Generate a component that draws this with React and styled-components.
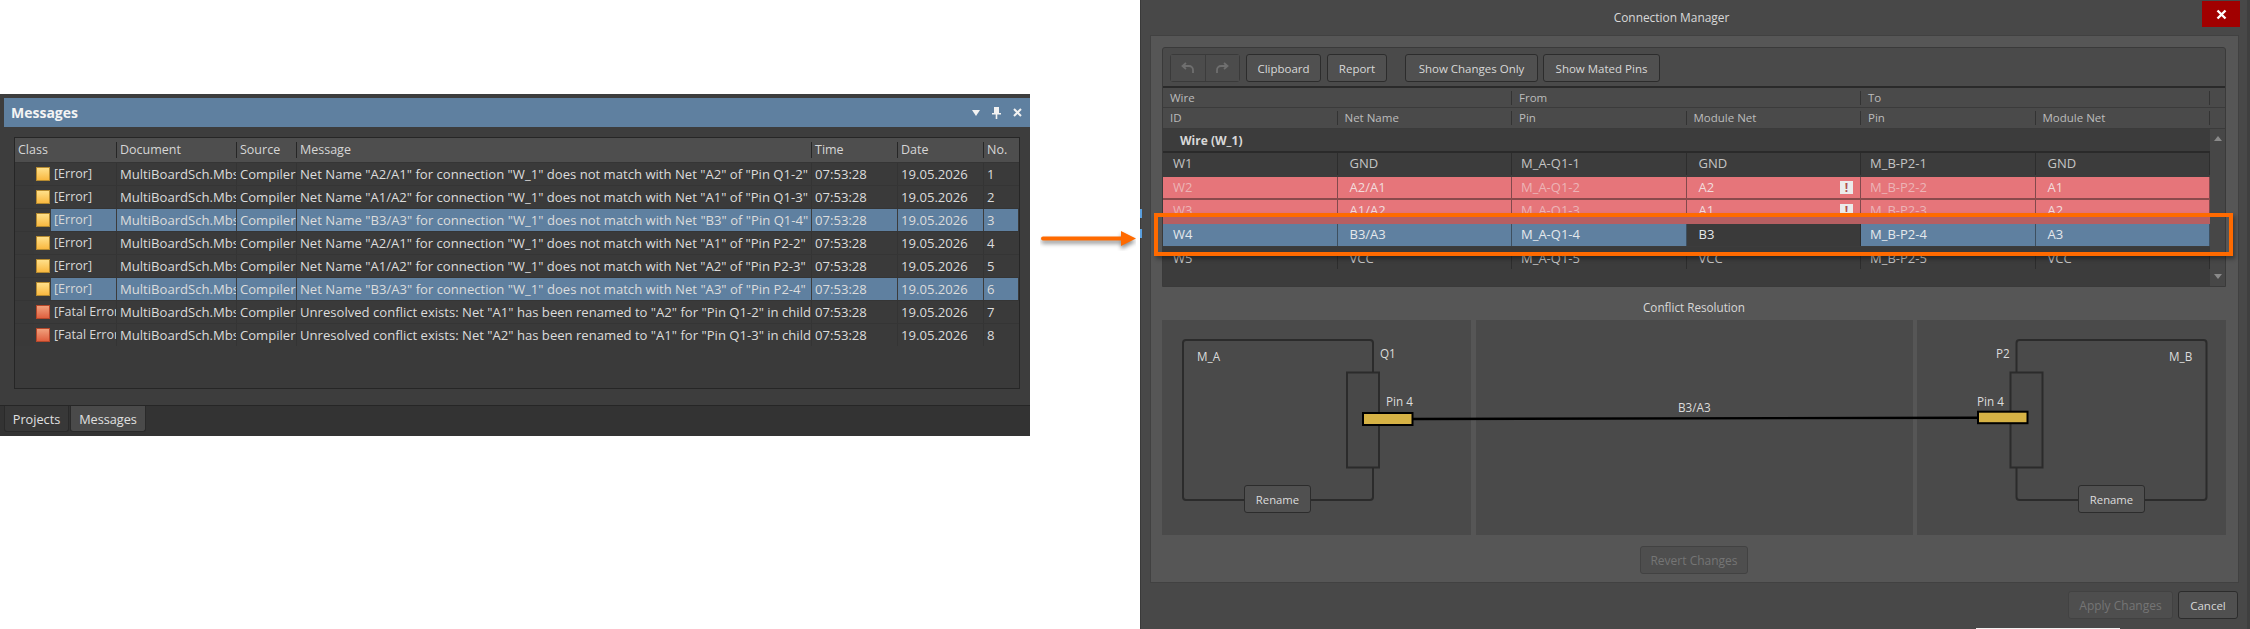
import React from 'react'
import styled, { createGlobalStyle } from 'styled-components'

const GlobalStyle = createGlobalStyle`
  html, body {
    margin: 0;
    padding: 0;
    background: #fff;
    overflow: hidden;
  }
  body {
    font-family: "Open Sans", "Noto Sans", "Liberation Sans", sans-serif;
  }
`

const messages = [
  { kind: 'error', text: 'Net Name "A2/A1" for connection "W_1" does not match with Net "A2" of "Pin Q1-2"' },
  { kind: 'error', text: 'Net Name "A1/A2" for connection "W_1" does not match with Net "A1" of "Pin Q1-3"' },
  { kind: 'error', text: 'Net Name "B3/A3" for connection "W_1" does not match with Net "B3" of "Pin Q1-4"', selected: true },
  { kind: 'error', text: 'Net Name "A2/A1" for connection "W_1" does not match with Net "A1" of "Pin P2-2"' },
  { kind: 'error', text: 'Net Name "A1/A2" for connection "W_1" does not match with Net "A2" of "Pin P2-3"' },
  { kind: 'error', text: 'Net Name "B3/A3" for connection "W_1" does not match with Net "A3" of "Pin P2-4"', selected: true },
  { kind: 'fatal', text: 'Unresolved conflict exists: Net "A1" has been renamed to "A2" for "Pin Q1-2" in child' },
  { kind: 'fatal', text: 'Unresolved conflict exists: Net "A2" has been renamed to "A1" for "Pin Q1-3" in child' },
]

const wires = [
  { id: 'W1', net: 'GND', from: 'M_A-Q1-1', fromNet: 'GND', to: 'M_B-P2-1', toNet: 'GND' },
  { id: 'W2', net: 'A2/A1', from: 'M_A-Q1-2', fromNet: 'A2', to: 'M_B-P2-2', toNet: 'A1', tone: 'red', warn: true },
  { id: 'W3', net: 'A1/A2', from: 'M_A-Q1-3', fromNet: 'A1', to: 'M_B-P2-3', toNet: 'A2', tone: 'red', warn: true },
  { id: 'W4', net: 'B3/A3', from: 'M_A-Q1-4', fromNet: 'B3', to: 'M_B-P2-4', toNet: 'A3', tone: 'blue', plainNet: true },
  { id: 'W5', net: 'VCC', from: 'M_A-Q1-5', fromNet: 'VCC', to: 'M_B-P2-5', toNet: 'VCC' },
]

const App = () => {
  return (
    <Page>
      <GlobalStyle />
      <MessagesPanel>
        <TitleBar>
          <PanelTitle>Messages</PanelTitle>
          <TitleIcons>
            <svg width="8" height="6" viewBox="0 0 8 6"><path d="M0 0h8L4 6z" fill="#f2f2f2" /></svg>
            <svg width="9" height="12" viewBox="0 0 9 12"><path d="M2 0h5v6h2v1.500H5.300V12H3.700V7.500H0V6h2z" fill="#f2f2f2" /></svg>
            <svg width="9" height="9" viewBox="0 0 9 9"><path d="M1 1l7 7M8 1L1 8" stroke="#f2f2f2" strokeWidth="2" /></svg>
          </TitleIcons>
        </TitleBar>
        <MessageTable>
          <MessageHead>
            <HeadCell>Class</HeadCell>
            <HeadCell>Document</HeadCell>
            <HeadCell>Source</HeadCell>
            <HeadCell>Message</HeadCell>
            <HeadCell>Time</HeadCell>
            <HeadCell>Date</HeadCell>
            <HeadCell>No.</HeadCell>
          </MessageHead>
          {messages.map((m, i) => (
            <MessageRow key={i}>
              <TreeGutter />
              <ClassCell $selected={m.selected}>
                <StatusIcon $kind={m.kind} />
                <ClassLabel $selected={m.selected}>{m.kind === 'fatal' ? '[Fatal Error]' : '[Error]'}</ClassLabel>
              </ClassCell>
              <MessageCell $selected={m.selected}>MultiBoardSch.Mbs</MessageCell>
              <MessageCell $selected={m.selected}>Compiler</MessageCell>
              <MessageCell $selected={m.selected}>{m.text}</MessageCell>
              <MessageCell $selected={m.selected}>07:53:28</MessageCell>
              <MessageCell $selected={m.selected}>19.05.2026</MessageCell>
              <MessageCell $selected={m.selected}>{i + 1}</MessageCell>
            </MessageRow>
          ))}
        </MessageTable>
        <TabStrip>
          <Tab $w={65}>Projects</Tab>
          <Tab $w={76} $active>Messages</Tab>
        </TabStrip>
      </MessagesPanel>

      <ArrowSlot>
        <svg width="96" height="24" viewBox="0 0 96 24">
          <path d="M3 9.500H81V4L96 11.500 81 19V13.500H3a2 2 0 0 1 0-4z" fill="#ff6a00" style={{ filter: 'drop-shadow(0 3px 2px rgba(0,0,0,.45))' }} />
        </svg>
      </ArrowSlot>

      <Dialog>
        <DialogHeader>
          <DialogTitle>Connection Manager</DialogTitle>
          <CloseButton>
            <svg width="11" height="11" viewBox="0 0 11 11"><path d="M1.500 1.500l8 8M9.500 1.500l-8 8" stroke="#fff" strokeWidth="2.400" /></svg>
          </CloseButton>
        </DialogHeader>
        <DialogBody>
          <WireBox>
            <Toolbar>
              <UndoGroup>
                <UndoButton>
                  <svg width="14" height="12" viewBox="0 0 14 12"><path d="M5 1L1.500 4 5 7M2 4h6a4 4 0 0 1 4 4v3" fill="none" stroke="#6f6f6f" strokeWidth="1.800" /></svg>
                </UndoButton>
                <UndoButton>
                  <svg width="14" height="12" viewBox="0 0 14 12"><path d="M9 1l3.500 3L9 7M12 4H6a4 4 0 0 0-4 4v3" fill="none" stroke="#6f6f6f" strokeWidth="1.800" /></svg>
                </UndoButton>
              </UndoGroup>
              <ToolButton $w={75} $ml={6}>Clipboard</ToolButton>
              <ToolButton $w={60} $ml={6}>Report</ToolButton>
              <ToolButton $w={133} $ml={18}>Show Changes Only</ToolButton>
              <ToolButton $w={117} $ml={5}>Show Mated Pins</ToolButton>
            </Toolbar>

            <WireHeadRow $h={20}>
              <WireHeadCell $span={2}>Wire</WireHeadCell>
              <WireHeadCell $span={2}>From</WireHeadCell>
              <WireHeadCell $span={2}>To</WireHeadCell>
              <HeadEnd />
            </WireHeadRow>
            <WireHeadRow $h={21}>
              <WireHeadCell>ID</WireHeadCell>
              <WireHeadCell>Net Name</WireHeadCell>
              <WireHeadCell>Pin</WireHeadCell>
              <WireHeadCell>Module Net</WireHeadCell>
              <WireHeadCell>Pin</WireHeadCell>
              <WireHeadCell>Module Net</WireHeadCell>
              <HeadEnd />
            </WireHeadRow>

            <WireScroll>
              <WireList>
                <GroupRow>Wire (W_1)</GroupRow>
                {wires.map((w) => (
                  <WireRow key={w.id} $tone={w.tone}>
                    <WireCell $pad={10}>{w.id}</WireCell>
                    <WireCell $pad={12} $tone={w.tone}>{w.net}</WireCell>
                    <WireCell $pad={9}>{w.from}</WireCell>
                    <WireCell $pad={12} $tone={w.tone} $plain={w.plainNet}>
                      {w.fromNet}
                      {w.warn && <WarnBadge>!</WarnBadge>}
                    </WireCell>
                    <WireCell $pad={9}>{w.to}</WireCell>
                    <WireCell $pad={12} $tone={w.tone}>{w.toNet}</WireCell>
                  </WireRow>
                ))}
              </WireList>
              <ScrollColumn>
                <svg width="8" height="5" viewBox="0 0 8 5"><path d="M0 5L4 0l4 5z" fill="#8a8a8a" /></svg>
                <svg width="8" height="5" viewBox="0 0 8 5"><path d="M0 0l4 5 4-5z" fill="#8a8a8a" /></svg>
              </ScrollColumn>
              <HighlightFrame>
                <ShadeTop />
                <ShadeBottom />
              </HighlightFrame>
            </WireScroll>
          </WireBox>

          <SectionTitle>Conflict Resolution</SectionTitle>

          <ConflictRow>
            <ConflictPane />
            <ConflictPane />
            <ConflictPane />
            <DiagramLayer width="1064" height="215" viewBox="0 0 1064 215">
              <g fill="none" stroke="#2b2b2b" strokeWidth="2">
                <rect x="21" y="20" width="190" height="160" rx="3" />
                <rect x="854.500" y="20" width="190" height="160" rx="3" />
              </g>
              <g fill="#484848" stroke="#2b2b2b" strokeWidth="2">
                <rect x="185" y="52.500" width="32" height="95" />
                <rect x="848.500" y="52.500" width="32" height="95" />
              </g>
              <path d="M251 99L816 97.700" stroke="#000" strokeWidth="2.400" />
              <g fill="#d6b245" stroke="#000" strokeWidth="2">
                <rect x="201" y="93" width="49.500" height="12" />
                <rect x="816" y="91.700" width="49.500" height="11.500" />
              </g>
              <DiagramText x="35" y="41">M_A</DiagramText>
              <DiagramText x="218" y="38">Q1</DiagramText>
              <DiagramText x="224" y="86">Pin 4</DiagramText>
              <DiagramText x="516" y="92">B3/A3</DiagramText>
              <DiagramText x="834" y="38">P2</DiagramText>
              <DiagramText x="1007" y="41">M_B</DiagramText>
              <DiagramText x="815" y="86">Pin 4</DiagramText>
            </DiagramLayer>
            <RenameButton $x={82}>Rename</RenameButton>
            <RenameButton $x={916}>Rename</RenameButton>
          </ConflictRow>

          <RevertRow>
            <DimButton $w={108}>Revert Changes</DimButton>
          </RevertRow>
        </DialogBody>
        <DialogFooter>
          <DimButton $w={105}>Apply Changes</DimButton>
          <ToolButton $w={60} $ml={5}>Cancel</ToolButton>
        </DialogFooter>
      </Dialog>
    </Page>
  )
}

export default App

const Page = styled.div`
  width: 2250px;
  height: 629px;
  display: flex;
  align-items: flex-start;
  background: #fff;
  overflow: hidden;
`

const MessagesPanel = styled.section`
  width: 1030px;
  height: 342px;
  margin-top: 94px;
  flex: none;
  background: #3d3d3d;
  padding: 4px 0 0 4px;
  box-sizing: border-box;
  display: flex;
  flex-direction: column;
`

const TitleBar = styled.header`
  height: 29px;
  flex: none;
  background: #5f80a0;
  display: flex;
  align-items: center;
  justify-content: space-between;
  padding: 0 8px 0 7px;
`

const PanelTitle = styled.h2`
  margin: 0;
  font-size: 14px;
  font-weight: 700;
  color: #f4f4f4;
`

const TitleIcons = styled.div`
  display: flex;
  align-items: center;
  gap: 12px;
`

const MessageTable = styled.div`
  margin: 10px 10px 0 10px;
  height: 252px;
  flex: none;
  box-sizing: border-box;
  border: 1px solid #262626;
  background: #3a3a3a;
  overflow: hidden;
`

const messageColumns = '102px 120px 60px 515px 86px 86px 34px'

const MessageHead = styled.div`
  display: grid;
  grid-template-columns: ${messageColumns};
  height: 24px;
  background: #4e4e4e;
`

const HeadCell = styled.div`
  font-size: 12.500px;
  line-height: 24px;
  color: #d6d6d6;
  padding-left: 3px;
  position: relative;

  &:not(:last-child)::after {
    content: "";
    position: absolute;
    right: 0;
    top: 4px;
    bottom: 4px;
    width: 1px;
    background: #262626;
  }
`

const MessageRow = styled.div`
  display: grid;
  grid-template-columns: 19px 83px 120px 60px 515px 86px 86px 34px;
  height: 23px;
  box-sizing: border-box;
  border-top: 1px solid #353535;
`

const TreeGutter = styled.div`
  background: #393939;
`

const ClassCell = styled.div`
  display: flex;
  align-items: center;
  position: relative;
  border-right: 1px solid ${(p) => (p.$selected ? '#3c3c3c' : '#343434')};
  padding-left: 2px;
  overflow: hidden;
`

const ClassLabel = styled.span`
  font-size: 12.500px;
  line-height: 22px;
  color: #d8d8d8;
  white-space: nowrap;
  margin-left: 1px;
  padding-left: 3px;
  flex: 1;
  background: ${(p) => (p.$selected ? '#5f80a0' : 'transparent')};
`

const StatusIcon = styled.i`
  width: 14px;
  height: 14px;
  flex: none;
  box-sizing: border-box;
  border: 1px solid ${(p) => (p.$kind === 'fatal' ? '#b5472a' : '#b58a30')};
  background: ${(p) =>
    p.$kind === 'fatal'
      ? 'linear-gradient(#f0a07c, #e0603f)'
      : 'linear-gradient(#ffe08a, #f9b840)'};
`

const MessageCell = styled.div`
  font-size: 13.100px;
  line-height: 22px;
  color: #dcdcdc;
  padding-left: 3px;
  white-space: nowrap;
  overflow: hidden;
  background: ${(p) => (p.$selected ? '#5f80a0' : 'transparent')};
  border-right: 1px solid ${(p) => (p.$selected ? '#3c3c3c' : '#343434')};

  &:last-child {
    border-right: none;
  }
`

const TabStrip = styled.nav`
  margin: 16px 0 0 -4px;
  padding-left: 4px;
  flex: 1;
  background: #333;
  border-top: 1px solid #262626;
  display: flex;
  align-items: flex-start;
  gap: 1px;
`

const Tab = styled.div`
  width: ${(p) => p.$w}px;
  height: 26px;
  box-sizing: border-box;
  font-size: 12.700px;
  line-height: 26px;
  text-align: center;
  color: #e0e0e0;
  background: ${(p) => (p.$active ? '#4a4a4a' : '#383838')};
  border: 1px solid #2a2a2a;
  border-top: none;
  border-radius: 0 0 3px 3px;
`

const ArrowSlot = styled.div`
  width: 110px;
  flex: none;
  margin-top: 227px;
  padding-left: 10px;
  box-sizing: border-box;
`

const Dialog = styled.section`
  position: relative;
  width: 1110px;
  height: 629px;
  flex: none;
  background: #484848;
  border-left: 1px solid #3a3a3a;
  border-right: 3px solid #3f3f3f;
  box-sizing: border-box;
  display: flex;
  flex-direction: column;

  /* leftovers of the window behind, showing along the edges */
  &::before {
    content: "";
    position: absolute;
    left: -1px;
    top: 209px;
    width: 2px;
    height: 9px;
    background: #5aa0e0;
    box-shadow: 0 20px 0 #5aa0e0;
  }

  &::after {
    content: "";
    position: absolute;
    left: 835px;
    bottom: 0;
    width: 144px;
    height: 1px;
    background: #f2f2f2;
  }
`

const DialogHeader = styled.header`
  height: 34px;
  flex: none;
  display: flex;
  justify-content: space-between;
  align-items: flex-start;
  padding: 1px 7px 0 0;
`

const DialogTitle = styled.h1`
  flex: 1;
  margin: 0;
  font-size: 11.900px;
  font-weight: 400;
  line-height: 34px;
  margin-top: -1px;
  text-align: center;
  color: #d8d8d8;
`

const CloseButton = styled.div`
  width: 38px;
  height: 26px;
  background: #a10000;
  display: flex;
  align-items: center;
  justify-content: center;
`

const DialogBody = styled.div`
  margin-left: 9px;
  width: 1089px;
  height: 548px;
  flex: none;
  box-sizing: border-box;
  background: #565656;
  border: 1px solid #414141;
  padding: 11px 12px 0 11px;
`

const WireBox = styled.div`
  height: 240px;
  box-sizing: border-box;
  border: 1px solid #3a3a3a;
  border-radius: 3px 3px 0 0;
  background: #4a4a4a;
  display: flex;
  flex-direction: column;
`

const Toolbar = styled.div`
  height: 40px;
  flex: none;
  box-sizing: border-box;
  padding: 6px 0 0 7px;
  display: flex;
  align-items: flex-start;
  border-bottom: 2px solid #2a2a2a;
`

const UndoGroup = styled.div`
  width: 70px;
  height: 28px;
  box-sizing: border-box;
  border: 1px solid #3a3a3a;
  border-radius: 3px;
  display: flex;
`

const UndoButton = styled.div`
  flex: 1;
  display: flex;
  align-items: center;
  justify-content: center;
  background: #4c4c4c;

  & + & {
    border-left: 1px solid #3c3c3c;
  }
`

const ToolButton = styled.button`
  width: ${(p) => p.$w}px;
  height: 28px;
  margin-left: ${(p) => p.$ml || 0}px;
  padding: 0;
  box-sizing: border-box;
  border: 1px solid #2c2c2c;
  border-radius: 3px;
  background: #505050;
  color: #d8d8d8;
  font-family: inherit;
  font-size: 11.500px;
  white-space: nowrap;
`

const wireColumns = 'repeat(6, 174.500px)'

const WireHeadRow = styled.div`
  height: ${(p) => p.$h}px;
  flex: none;
  display: grid;
  grid-template-columns: ${wireColumns} 1fr;
  background: #4a4a4a;
  box-sizing: border-box;
  border-bottom: 1px solid #3b3b3b;
`

const WireHeadCell = styled.div`
  grid-column: span ${(p) => p.$span || 1};
  font-size: 11.500px;
  line-height: 20px;
  color: #bcbcbc;
  padding-left: 7px;
  position: relative;

  &::after {
    content: "";
    position: absolute;
    right: 0;
    top: 3px;
    bottom: 3px;
    width: 1px;
    background: #333;
  }
`

const HeadEnd = styled.div``

const WireScroll = styled.div`
  flex: 1;
  display: flex;
  position: relative;
  background: #3c3c3c;
`

const WireList = styled.div`
  width: 1047px;
  flex: none;
`

const GroupRow = styled.div`
  height: 24px;
  box-sizing: border-box;
  padding-left: 17px;
  font-size: 12px;
  font-weight: 700;
  line-height: 23px;
  color: #d8d8d8;
  border-bottom: 2px solid #2a2a2a;
`

const toneColors = { red: '#e6757a', blue: '#5f80a0' }
const toneText = { red: '#ecb4b6', blue: '#e4e8ec' }
const toneNetText = { red: '#f2dcdc', blue: '#e4e8ec' }

const WireRow = styled.div`
  height: 23.700px;
  box-sizing: border-box;
  display: grid;
  grid-template-columns: ${wireColumns};
  background: ${(p) => toneColors[p.$tone] || '#3c3c3c'};
  color: ${(p) => toneText[p.$tone] || '#c4c4c4'};
  border-bottom: 2px solid ${(p) => (p.$tone === 'red' ? '#8a4a4c' : '#3c3c3c')};
`

const WireCell = styled.div`
  position: relative;
  font-size: 13px;
  line-height: 21px;
  color: ${(p) => toneNetText[p.$tone] || 'inherit'};
  padding-left: ${(p) => p.$pad}px;
  border-right: 1px solid rgba(30, 30, 30, 0.5);
  background: ${(p) => (p.$plain ? '#3a3a3a' : 'transparent')};
`

const WarnBadge = styled.span`
  position: absolute;
  right: 7px;
  top: 4px;
  width: 13px;
  height: 13px;
  background: #ebebeb;
  color: #b05050;
  font-size: 12px;
  font-weight: 700;
  line-height: 13px;
  text-align: center;
`

const ScrollColumn = styled.div`
  flex: 1;
  padding: 7px 0 7px 0;
  background: #474747;
  display: flex;
  flex-direction: column;
  align-items: center;
  justify-content: space-between;
`

const HighlightFrame = styled.div`
  position: absolute;
  left: -9px;
  right: -8px;
  top: 84px;
  height: 43px;
  box-sizing: border-box;
  border: 4px solid #ff6a00;
  box-shadow: 2px 3px 4px rgba(0, 0, 0, 0.35);
`

const ShadeTop = styled.div`
  position: absolute;
  left: 5px;
  top: 0;
  width: 1047px;
  height: 7px;
  background: #b65f62;
`

const ShadeBottom = styled.div`
  position: absolute;
  left: 5px;
  bottom: 0;
  width: 1047px;
  height: 5px;
  background: #3a3a3a;
`

const SectionTitle = styled.div`
  height: 33px;
  font-size: 11.700px;
  line-height: 40px;
  text-align: center;
  color: #d8d8d8;
`

const ConflictRow = styled.div`
  position: relative;
  height: 215px;
  display: grid;
  grid-template-columns: 309px 437px 309px;
  justify-content: space-between;
`

const ConflictPane = styled.div`
  background: #4a4a4a;
`

const DiagramLayer = styled.svg`
  position: absolute;
  left: 0;
  top: 0;
`

const DiagramText = styled.text`
  font-family: "Open Sans", "Noto Sans", sans-serif;
  font-size: 11.700px;
  fill: #dcdcdc;
`

const RenameButton = styled.button`
  position: absolute;
  left: ${(p) => p.$x}px;
  top: 165px;
  width: 67px;
  height: 28px;
  padding: 0;
  box-sizing: border-box;
  border: 1px solid #2c2c2c;
  border-radius: 3px;
  background: #505050;
  color: #dcdcdc;
  font-family: inherit;
  font-size: 11.300px;
`

const RevertRow = styled.div`
  display: flex;
  justify-content: center;
  padding-top: 11px;
`

const DimButton = styled.button`
  width: ${(p) => p.$w}px;
  height: 28px;
  padding: 0;
  box-sizing: border-box;
  border: 1px solid #424242;
  border-radius: 3px;
  background: #4e4e4e;
  color: #757575;
  font-family: inherit;
  font-size: 12px;
  white-space: nowrap;
`

const DialogFooter = styled.footer`
  flex: 1;
  display: flex;
  justify-content: flex-end;
  align-items: flex-start;
  padding: 8px 9px 0 0;
`
